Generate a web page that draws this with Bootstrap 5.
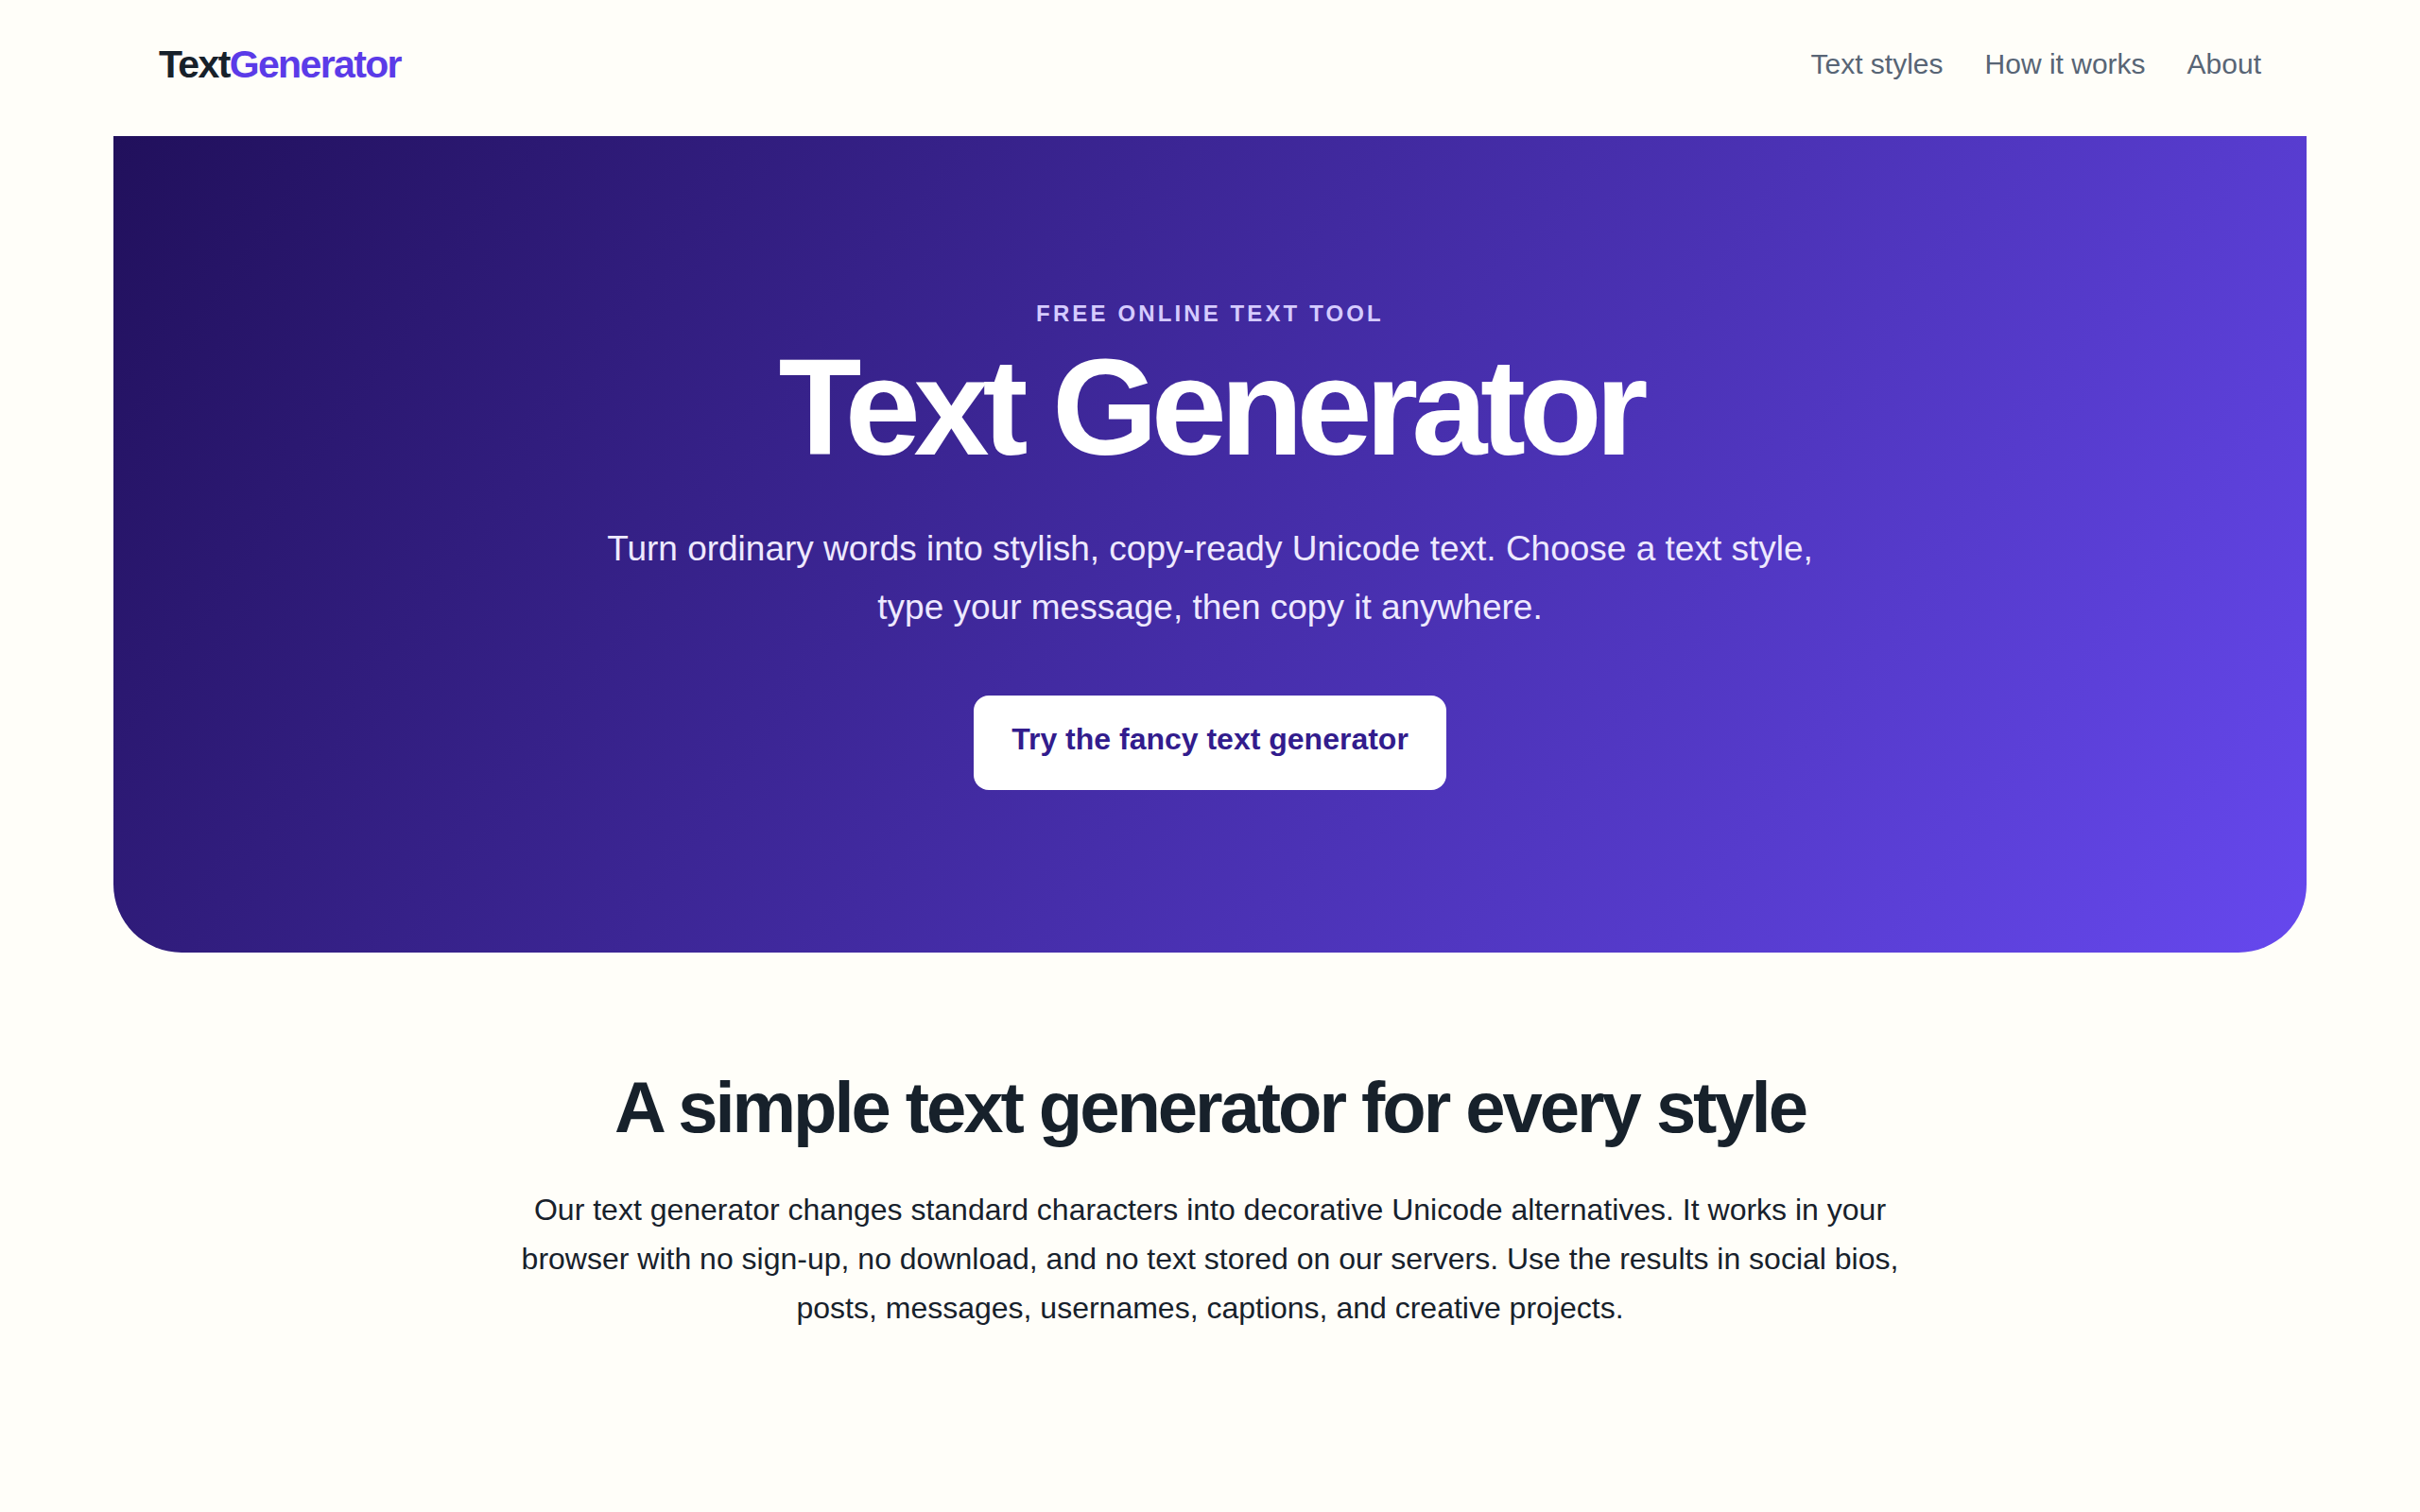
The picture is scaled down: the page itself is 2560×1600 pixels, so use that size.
<!DOCTYPE html>
<html lang="en">
<head>
<meta charset="utf-8">
<meta name="viewport" content="width=device-width, initial-scale=1">
<title>Text Generator</title>
<link href="https://cdn.jsdelivr.net/npm/bootstrap@5.3.0/dist/css/bootstrap.min.css" rel="stylesheet">
<style>
body{background:#fffef9;color:#17212b;font-family:"Liberation Sans",Arial,sans-serif;font-size:32px;line-height:52px}
.page-shell{max-width:2320px}
.site-nav{padding:42px 48px 50px}
.brand-name{font-size:41px;line-height:52px;font-weight:700;letter-spacing:-.04em;color:#17212b;margin:0;padding:0}
.brand-name span{color:#5b3be8}
.site-links{gap:44px}
.site-links .nav-link{font-size:30px;line-height:52px;color:#586575;padding:0}
.hero-panel{background:linear-gradient(125deg,#21105c,#6648ee);border-radius:0 0 72px 72px;padding:168px 48px 172px}
.hero-tag{font-size:24px;line-height:40px;font-weight:700;letter-spacing:.13em;color:#d5cbff;margin:0}
.hero-title{font-size:144px;line-height:160px;font-weight:700;letter-spacing:-.05em;color:#fff;margin:0 0 38px}
.hero-copy{max-width:1320px;font-size:37px;line-height:62px;color:#eee9ff;margin-bottom:62px}
.hero-btn{font-size:32px;line-height:52px;font-weight:700;color:#321c8d;background:#fff;border:0;border-radius:16px;padding:20px 40px 28px}
.hero-btn:hover{background:#eee9ff;color:#321c8d}
.intro{max-width:1520px;padding:126px 24px}
.intro-title{font-size:76px;line-height:76px;font-weight:700;letter-spacing:-.04em;margin:0 0 44px}
</style>
</head>
<body>
<div class="container-fluid page-shell p-0">
<header>
<nav class="site-nav d-flex justify-content-between align-items-center" aria-label="Main">
<a class="brand-name navbar-brand" href="#">Text<span>Generator</span></a>
<div class="site-links nav">
<a class="nav-link" href="#styles">Text styles</a>
<a class="nav-link" href="#how">How it works</a>
<a class="nav-link" href="#about">About</a>
</div>
</nav>
</header>
<main>
<section class="hero-panel text-center">
<p class="hero-tag text-uppercase">Free online text tool</p>
<h1 class="hero-title">Text Generator</h1>
<p class="hero-copy mx-auto">Turn ordinary words into stylish, copy-ready Unicode text. Choose a text style, type your message, then copy it anywhere.</p>
<a class="hero-btn btn" href="#styles">Try the fancy text generator</a>
</section>
<section class="intro text-center mx-auto" id="about">
<h2 class="intro-title">A simple text generator for every style</h2>
<p class="mb-0">Our text generator changes standard characters into decorative Unicode alternatives. It works in your browser with no sign-up, no download, and no text stored on our servers. Use the results in social bios, posts, messages, usernames, captions, and creative projects.</p>
</section>
</main>
</div>
<script src="https://cdn.jsdelivr.net/npm/bootstrap@5.3.0/dist/js/bootstrap.bundle.min.js"></script>
</body>
</html>
